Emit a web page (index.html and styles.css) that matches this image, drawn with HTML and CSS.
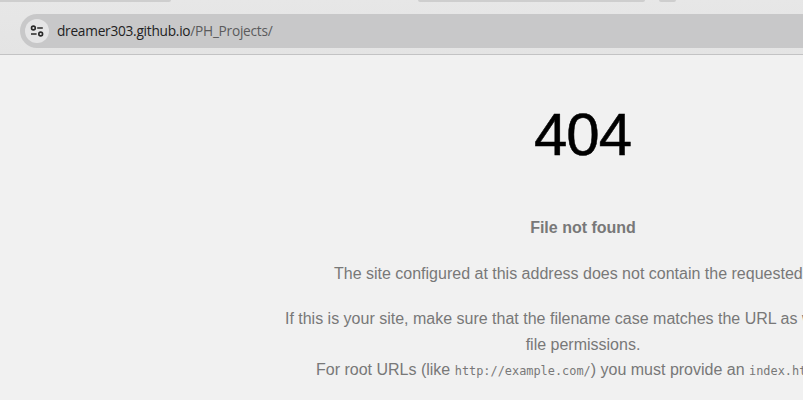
FILE: index.html
```html
<!DOCTYPE html>
<html lang="en">
<head>
<meta charset="utf-8">
<title>File not found</title>
<link rel="stylesheet" href="styles.css">
</head>
<body>
<header class="browser">
  <div class="tabs"><i class="tab tab-first"></i><i class="tab tab-second"></i><i class="tab tab-new"></i></div>
  <div class="address">
    <span class="site-info">
      <svg width="14" height="14" viewBox="0 0 14 14" fill="none" stroke="#292929" stroke-width="1.6">
        <circle cx="3.4" cy="4" r="1.9"/><path d="M7.2 4H12.8M1 10H6.6"/><circle cx="10.7" cy="10" r="1.9"/>
      </svg>
    </span>
    <span class="url"><span class="host">dreamer303.github.io</span>/PH_Projects/</span>
  </div>
</header>
<main class="container">
  <h1>404</h1>
  <p><strong>File not found</strong></p>
  <p>The site configured at this address does not contain the requested file.</p>
  <p>If this is your site, make sure that the filename case matches the URL as well as any file permissions.<br>
  For root URLs (like <code>http://example.com/</code>) you must provide an <code>index.html</code> file.</p>
</main>
</body>
</html>
```
FILE: styles.css
```css
* { box-sizing: border-box; }
html, body { margin: 0; height: 400px; overflow: hidden; }
body { background: #f1f1f1; font-family: "Liberation Sans", Arial, sans-serif; }

.browser { height: 55px; background: linear-gradient(#e7e7e7, #e4e4e4); border-bottom: 1px solid #c3c3c4; }
.tabs { display: flex; height: 14px; align-items: flex-start; }
.tab { height: 2px; background: #cecece; flex: none; }
.tab-first { width: 171px; border-radius: 0 0 8px 0; }
.tab-second { width: 227px; margin-left: 247px; border-radius: 0 0 8px 8px; }
.tab-new { width: 17px; margin-left: 14px; border-radius: 0 0 8px 8px; }

.address { margin-left: 20px; height: 34px; border-radius: 17px 0 0 17px; background: #c8c8c9; display: flex; align-items: center; padding-left: 5px; }
.site-info { width: 24px; height: 24px; border-radius: 50%; background: #e5e5e6; display: flex; align-items: center; justify-content: center; }
.url { margin-left: 8px; font: 13.7px/20px "Open Sans", "Noto Sans", sans-serif; letter-spacing: -0.26px; color: #5b5b5c; white-space: nowrap; }
.host { color: #222; }

.container { width: 600px; margin: 50px 0 0 283px; text-align: center; }
h1 { margin: 0 1px 50px 0; font-size: 60px; line-height: 60px; font-weight: 100; letter-spacing: -1px; color: #000; -webkit-text-stroke: 0.5px #000; }
p { margin: 20px 0 10px; font-size: 16px; line-height: 1.6; color: #787878; }
code { font: 11.9px "DejaVu Sans Mono", monospace; }
```
